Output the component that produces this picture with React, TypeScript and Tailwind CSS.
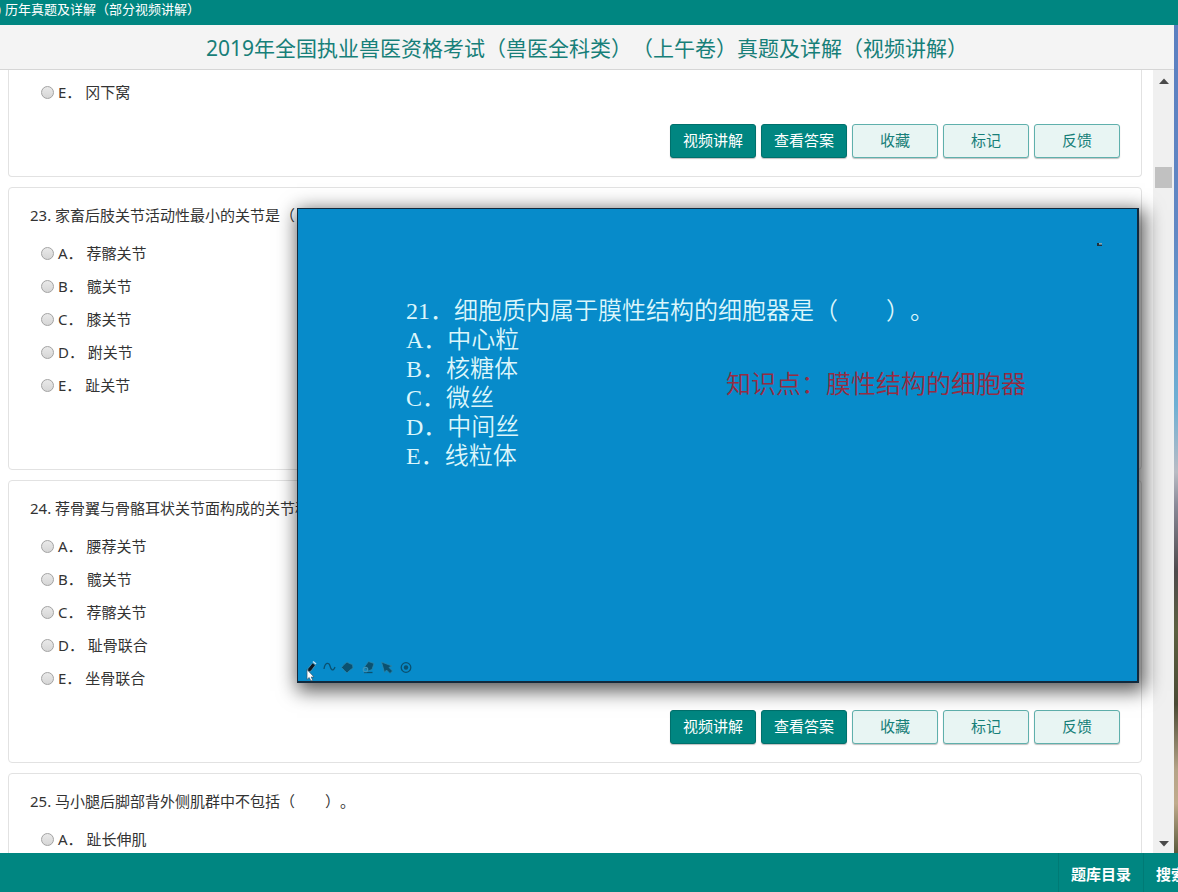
import React from "react";

type Question = {
  id: number;
  title?: string;
  options: [string, string][];
  actions: boolean;
};

const questions: Question[] = [
  {
    id: 23,
    title: "家畜后肢关节活动性最小的关节是（　　）。",
    options: [
      ["A", "荐髂关节"],
      ["B", "髋关节"],
      ["C", "膝关节"],
      ["D", "跗关节"],
      ["E", "趾关节"],
    ],
    actions: false,
  },
  {
    id: 24,
    title: "荐骨翼与骨骼耳状关节面构成的关节称",
    options: [
      ["A", "腰荐关节"],
      ["B", "髋关节"],
      ["C", "荐髂关节"],
      ["D", "耻骨联合"],
      ["E", "坐骨联合"],
    ],
    actions: true,
  },
  {
    id: 25,
    title: "马小腿后脚部背外侧肌群中不包括（　　）。",
    options: [["A", "趾长伸肌"]],
    actions: false,
  },
];

function Option({ group, letter, text }: { group: number; letter: string; text: string }) {
  return (
    <label className="flex h-[33px] items-center gap-1 pl-8">
      <input
        type="radio"
        name={`question-${group}`}
        className="size-[13px] shrink-0 appearance-none rounded-full border border-[#a3a3a3] bg-linear-to-b from-[#e9e9e9] to-[#d6d6d6] checked:border-4 checked:border-[#008681]"
      />
      <span className="whitespace-pre">{`${letter}． ${text}`}</span>
    </label>
  );
}

function Actions() {
  const base = "h-[34px] w-[86px] rounded-[3px] border pb-0.5 text-[15px] shadow-[0_1px_1px_rgba(0,0,0,0.25)]";
  const solid = `${base} border-[#00706c] bg-[#008681] text-white`;
  const light = `${base} border-[#5fb0ac] bg-[#e8f5f3] text-[#177f79]`;
  return (
    <div className="mt-[15px] flex justify-end gap-[5px] pr-[21px]">
      <button className={solid}>视频讲解</button>
      <button className={solid}>查看答案</button>
      <button className={light}>收藏</button>
      <button className={light}>标记</button>
      <button className={light}>反馈</button>
    </div>
  );
}

function Card({ q }: { q: Question }) {
  return (
    <section className="min-h-[283px] shrink-0 rounded border border-[#e2e2e2] bg-white pt-[15px]">
      <h2 className="mb-2.5 h-6 overflow-hidden pl-[21px] leading-6 whitespace-nowrap">
        {q.id}. {q.title}
      </h2>
      {q.options.map(([l, t]) => (
        <Option key={l} group={q.id} letter={l} text={t} />
      ))}
      {q.actions && <Actions />}
    </section>
  );
}

function ScrollBar() {
  return (
    <div className="flex w-[21px] shrink-0 flex-col items-center bg-[#f0f0f0]">
      <svg className="mt-2" width="10" height="6" viewBox="0 0 10 6">
        <path d="M0 6 5 0.5 10 6z" fill="#4a4a4a" />
      </svg>
      <div className="mt-[83px] h-[21px] w-[17px] bg-[#c1c1c1]" />
      <svg className="mt-auto mb-1.5" width="10" height="6" viewBox="0 0 10 6">
        <path d="M0 0 5 5.5 10 0z" fill="#4a4a4a" />
      </svg>
    </div>
  );
}

function DrawTools() {
  return (
    <svg className="absolute bottom-0 left-1.5" width="112" height="23" viewBox="0 0 112 23" role="img" aria-label="画笔工具">
      <g stroke="#4b9cc2" strokeWidth="0.8" fill="#0b5170">
        <path d="M3 15 4 10.500 8.500 5 11.500 7 7 13z" fill="#10181f" />
        <path d="M9 3.500 12 6" stroke="#cfe6f2" strokeWidth="1.500" />
        <path d="M37.500 9.500 40 6.500 43 4 45.500 5.500 48.500 6.500 49 10 45.500 12.500 43 15 40.500 12.500z" stroke="#2c86ab" />
        <path d="M60 9.500 64.500 3.500 70 5.500 68 11.500 64 13z" stroke="#2c86ab" />
        <path d="M77.500 4 88 8 85 9.500 88.500 13 86 15.500 82.500 12 80.500 14.500z" stroke="#2c86ab" />
      </g>
      <g fill="none" stroke="#0b5170" strokeWidth="1.3">
        <path d="M20 11C21 4 25 4 26 8S29 14 31 9" />
        <path d="M60 14.500H68.500" />
        <circle cx="61.500" cy="11.500" r="2.200" stroke="#3a93bb" />
        <circle cx="102" cy="9.500" r="4.800" />
      </g>
      <circle cx="102" cy="9.500" r="2.200" fill="#0b5170" />
      <path d="M3 11.500V21.500L5.200 19.500 7 23 8.700 22.200 7.200 19H10z" fill="#fff" stroke="#38566b" strokeWidth="0.700" />
    </svg>
  );
}

const slideOptions = ["A．中心粒", "B．核糖体", "C．微丝", "D．中间丝", "E．线粒体"];

function VideoWindow() {
  return (
    <div className="absolute top-[208px] left-[297px] h-[475px] w-[842px] border border-r-2 border-b-2 border-[#12293c] bg-[#078bca] font-['Liberation_Serif','Noto_Sans_CJK_SC',serif] text-2xl font-[350] shadow-[3px_5px_18px_3px_rgba(0,0,0,0.65)]">
      <div className="pt-[88px] pl-[108px] leading-[29px] text-[#dcf6fb]">
        <p className="whitespace-nowrap">21．细胞质内属于膜性结构的细胞器是（　　）。</p>
        <ul>
          {slideOptions.map((o) => (
            <li key={o}>{o}</li>
          ))}
        </ul>
      </div>
      <p className="absolute top-[161px] left-[428px] text-[25px] leading-[30px] whitespace-nowrap text-[#962c42]">
        知识点：膜性结构的细胞器
      </p>
      <svg className="absolute top-[34px] right-[35px]" width="5" height="4" viewBox="0 0 5 4">
        <path d="M0 0H2V1.500H5V3H0z" fill="#21303a" />
        <path d="M2 0H5V1.500H2z" fill="#8fa5b0" />
      </svg>
      <DrawTools />
    </div>
  );
}

export default function App() {
  return (
    <div className="relative flex h-screen flex-col overflow-hidden bg-white font-['Noto_Sans','Noto_Sans_CJK_SC',sans-serif] text-[15px] text-[#333] [text-spacing-trim:space-all]">
      <header className="flex h-[25px] shrink-0 items-start overflow-hidden bg-[#008681] text-[13px] leading-[18px] whitespace-nowrap text-white">
        <span className="flex w-[5px] shrink-0 justify-end pr-1">)</span>
        <span>历年真题及详解（部分视频讲解）</span>
      </header>
      <div className="flex min-h-0 flex-1">
        <div className="flex min-w-0 flex-1 flex-col">
          <h1 className="h-[45px] shrink-0 border-b border-[#d6d6d6] bg-[#f4f4f4] text-center text-[21px] leading-[46px] whitespace-nowrap text-[#177f79]">
            2019年全国执业兽医资格考试（兽医全科类）（上午卷）真题及详解（视频讲解）
          </h1>
          <div className="flex min-h-0 flex-1">
            <main className="flex min-w-0 flex-1 flex-col gap-2.5 overflow-hidden pr-[11px] pl-2">
              <section className="shrink-0 rounded-b border border-t-0 border-[#e2e2e2] pt-1.5 pb-[18px]">
                <Option group={22} letter="E" text="冈下窝" />
                <Actions />
              </section>
              {questions.map((q) => (
                <Card key={q.id} q={q} />
              ))}
            </main>
            <ScrollBar />
          </div>
        </div>
        <div className="w-1 shrink-0 bg-[linear-gradient(to_bottom,#5b7fc0_0%,#6288c4_25%,#6fb0d4_46%,#b9bcc4_54%,#8a8a98_58%,#4e4a4c_66%,#5c6040_73%,#4a4a34_82%,#b5a488_90%,#c0ab8c_94%,#5a5a3c_100%)]" />
      </div>
      <footer className="flex h-[39px] shrink-0 justify-end overflow-hidden bg-[#008681] text-[15px] font-bold whitespace-nowrap text-white">
        <a href="#catalog" className="flex w-[85px] items-center justify-center border-l border-[#007a75] pt-1">
          题库目录
        </a>
        <a href="#search" className="flex w-[35px] items-center overflow-hidden border-l border-[#007a75] pt-1 pl-3">
          搜索
        </a>
      </footer>
      <VideoWindow />
    </div>
  );
}
